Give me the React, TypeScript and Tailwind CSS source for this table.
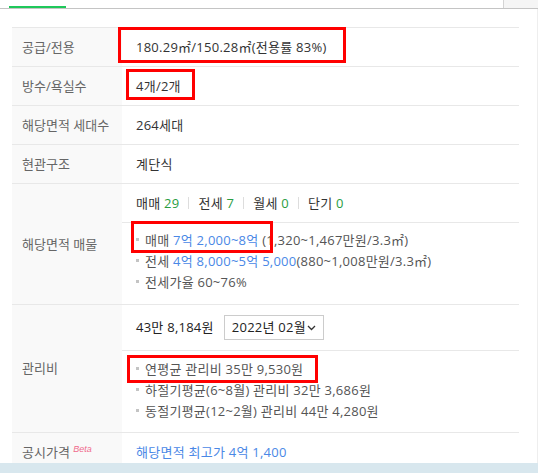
import React from 'react';

const font = { fontFamily: '"Open Sans", "Noto Sans CJK KR", sans-serif' };

const Dot = () => <span className="inline-block w-[3px] h-[3px] bg-[#c4c4c4] mr-[6px] align-middle relative top-[-2px]" />;

const Sep = () => <span className="inline-block w-px h-[12px] bg-[#ddd] mx-[9px] align-middle" />;

const Row: React.FC<{ label: React.ReactNode; children: React.ReactNode; h?: string }> = ({ label, children, h }) => (
  <div className="flex border-b border-[#e8e8e8]">
    <div className="w-[110px] shrink-0 bg-[#f9f9f9] pl-[10px] flex items-center text-[#666] tracking-normal">{label}</div>
    <div className={`flex-1 ${h ?? ''}`}>{children}</div>
  </div>
);

export default function App() {
  return (
    <div className="relative w-[538px] h-[473px] overflow-hidden bg-white text-[13px] text-[#333] tracking-[0.25px]" style={font}>
      {/* tab strip */}
      <div className="flex h-[8px] border-b border-[#c4c4c4] box-content">
        <div className="ml-[9px] w-[57px] h-[2px] mt-auto bg-[#1ec85a]" />
        <div className="ml-auto w-[35px] border-l border-[#d4d4d4] bg-[#f5f5f5]" />
      </div>

      <div className="h-[454px] border-r border-[#eee] pt-[18px] overflow-hidden">
        <div className="ml-[12px] w-[507px] border-t border-[#e8e8e8] leading-[21px]">
          <Row label="공급/전용" h="h-[38px] flex items-center pl-[14px]">
            <span>180.29㎡/150.28㎡(전용률 83%)</span>
          </Row>
          <Row label="방수/욕실수" h="h-[38px] flex items-center pl-[14px]">
            <span>4개/2개</span>
          </Row>
          <Row label="해당면적 세대수" h="h-[38px] flex items-center pl-[14px]">
            <span>264세대</span>
          </Row>
          <Row label="현관구조" h="h-[38px] flex items-center pl-[14px]">
            <span>계단식</span>
          </Row>
          <Row label="해당면적 매물">
            <div className="h-[39px] flex items-center pl-[14px] border-b border-[#e8e8e8]">
              <span>매매 <span className="text-[#2a9d3f]">29</span></span>
              <Sep />
              <span>전세 <span className="text-[#2a9d3f]">7</span></span>
              <Sep />
              <span>월세 <span className="text-[#2a9d3f]">0</span></span>
              <Sep />
              <span>단기 <span className="text-[#2a9d3f]">0</span></span>
            </div>
            <div className="pl-[14px] pt-[7px] pb-[11px] text-[#555]">
              <div><Dot />매매 <span className="text-[#4a88e6]">7억 2,000~8억</span> (1,320~1,467만원/3.3㎡)</div>
              <div><Dot />전세 <span className="text-[#4a88e6]">4억 8,000~5억 5,000</span>(880~1,008만원/3.3㎡)</div>
              <div><Dot />전세가율 60~76%</div>
            </div>
          </Row>
          <Row label="관리비">
            <div className="h-[46px] flex items-center pl-[14px] border-b border-[#e8e8e8]">
              <span className="text-[#222]">43만 8,184원</span>
              <div className="ml-[10px] h-[25px] w-[100px] border border-[#ccc] flex items-center pl-[7px] text-[#222]">
                2022년 02월
                <svg width="9" height="6" viewBox="0 0 9 6" className="ml-[1px]">
                  <path d="M1 1l3.5 3.5L8 1" fill="none" stroke="#333" strokeWidth="1.3" />
                </svg>
              </div>
            </div>
            <div className="pl-[14px] pt-[8px] pb-[10px] text-[#555]">
              <div><Dot />연평균 관리비 35만 9,530원</div>
              <div><Dot />하절기평균(6~8월) 관리비 32만 3,686원</div>
              <div><Dot />동절기평균(12~2월) 관리비 44만 4,280원</div>
            </div>
          </Row>
          <Row
            label={
              <span>
                공시가격 <sup className="text-[#f06b8c] italic text-[9px]" style={{ fontFamily: '"Liberation Sans", sans-serif' }}>Beta</sup>
              </span>
            }
            h="h-[38px] flex items-center pl-[14px]"
          >
            <span className="text-[#4a88e6]">해당면적 최고가 4억 1,400</span>
          </Row>
        </div>
      </div>

      <div className="h-[10px] bg-[#d8e7ee]" />

      {/* annotation boxes */}
      <div className="absolute left-[118px] top-[27px] w-[228px] h-[36px] border-[3px] border-[#f00]" />
      <div className="absolute left-[126px] top-[69px] w-[69px] h-[31px] border-[3px] border-[#f00]" />
      <div className="absolute left-[131px] top-[221px] w-[142px] h-[32px] border-[3px] border-[#f00]" />
      <div className="absolute left-[127px] top-[355px] w-[191px] h-[28px] border-[3px] border-[#f00]" />
    </div>
  );
}
